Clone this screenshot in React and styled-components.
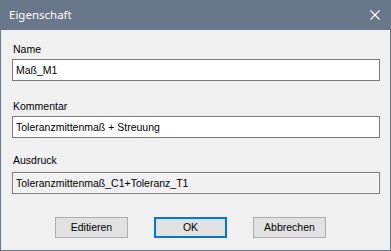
import React from "react";
import styled, { createGlobalStyle } from "styled-components";

const Global = createGlobalStyle`
  html, body { margin: 0; padding: 0; background: #f0f0f0; }
  body { font-family: "Liberation Sans", Arial, sans-serif; }
`;

const Window = styled.div`
  width: 391px;
  height: 251px;
  box-sizing: border-box;
  border: 1px solid #687789;
  border-top: none;
  background: #f0f0f0;
  display: flex;
  flex-direction: column;
`;

const TitleBar = styled.div`
  height: 30px;
  margin: 0 -1px;
  background: #687789;
  display: flex;
  align-items: center;
  justify-content: space-between;
  padding: 0 11px 1px 9px;
  box-sizing: border-box;
`;

const Title = styled.span`
  font-family: "Noto Sans", "Liberation Sans", sans-serif;
  font-size: 11.5px;
  color: #ffffff;
`;

const CloseIcon = styled.svg`
  width: 10px;
  height: 10px;
  display: block;
  margin-top: 1px;
`;

const Body = styled.div`
  flex: 1;
  display: flex;
  flex-direction: column;
  padding: 13px 10px 0 11px;
`;

const Field = styled.div`
  display: flex;
  flex-direction: column;
  margin-top: ${(p) => p.$top || 0}px;
`;

const Label = styled.label`
  font-size: 10.5px;
  line-height: 13px;
  color: #000;
  padding-left: 1px;
  margin-bottom: ${(p) => p.$gap || 3}px;
`;

const Box = styled.div`
  height: 22px;
  box-sizing: border-box;
  border: 1px solid #7a7a7a;
  background: ${(p) => (p.$readonly ? "#f0f0f0" : "#ffffff")};
  box-shadow: ${(p) => (p.$readonly ? "inset 0 0 0 1px #fbfbfb" : "none")};
  display: flex;
  align-items: center;
  padding: 0 0 1px 3px;
  font-size: 10.5px;
  color: #000;
  white-space: nowrap;
`;

const ButtonRow = styled.div`
  display: flex;
  gap: 26px;
  margin-top: 23px;
  padding-left: 43px;
`;

const Button = styled.button`
  width: 73px;
  height: 21px;
  box-sizing: border-box;
  margin: 0;
  padding: 0 0 1px;
  background: #e1e1e1;
  border: ${(p) => (p.$default ? "2px solid #0078d7" : "1px solid #adadad")};
  font-family: "Liberation Sans", Arial, sans-serif;
  font-size: 10.5px;
  color: #000;
`;

export default function App() {
  return (
    <>
      <Global />
      <Window>
        <TitleBar>
          <Title>Eigenschaft</Title>
          <CloseIcon viewBox="0 0 10 10">
            <path d="M0.5 0.5 L9.5 9.5 M9.5 0.5 L0.5 9.5" stroke="#fff" strokeWidth="1.1" fill="none" />
          </CloseIcon>
        </TitleBar>
        <Body>
          <Field>
            <Label>Name</Label>
            <Box>Maß_M1</Box>
          </Field>
          <Field $top={19}>
            <Label>Kommentar</Label>
            <Box>Toleranzmittenmaß + Streuung</Box>
          </Field>
          <Field $top={16}>
            <Label $gap={5}>Ausdruck</Label>
            <Box $readonly>Toleranzmittenmaß_C1+Toleranz_T1</Box>
          </Field>
          <ButtonRow>
            <Button>Editieren</Button>
            <Button $default>OK</Button>
            <Button>Abbrechen</Button>
          </ButtonRow>
        </Body>
      </Window>
    </>
  );
}
